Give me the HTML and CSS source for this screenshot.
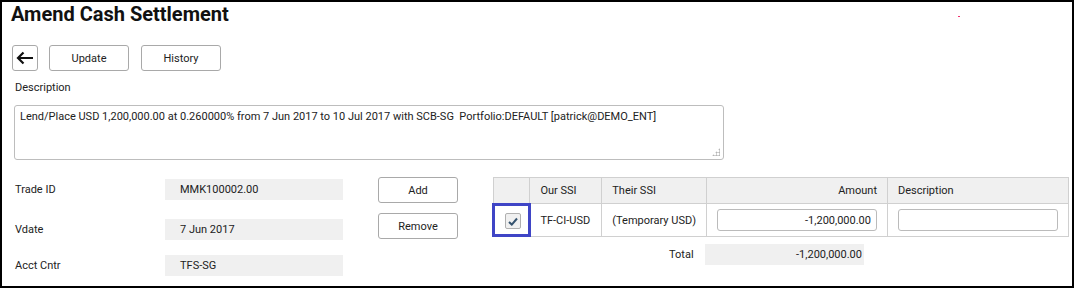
FILE: index.html
```html
<!DOCTYPE html>
<html lang="en">
<head>
    <meta charset="UTF-8">
    <title>Amend Cash Settlement</title>
    <link rel="stylesheet" href="styles.css">
</head>
<body>
    <div class="frame">
        <h1 class="page-title">Amend Cash Settlement</h1>
        <span class="marker"></span>

        <div class="toolbar">
            <button class="btn btn-back" title="Back">
                <svg width="18" height="14" viewBox="0 0 18 14">
                    <path d="M17 7H2M7.5 1.5L2 7l5.5 5.5" fill="none" stroke="#111" stroke-width="2.2"/>
                </svg>
            </button>
            <button class="btn">Update</button>
            <button class="btn">History</button>
        </div>

        <div class="desc-label">Description</div>
        <div class="desc-wrap">
            <textarea class="desc-box">Lend/Place USD 1,200,000.00 at 0.260000% from 7 Jun 2017 to 10 Jul 2017 with SCB-SG  Portfolio:DEFAULT [patrick@DEMO_ENT]</textarea>
        </div>

        <div class="lower">
            <div class="fields">
                <div class="field">
                    <span class="field-label">Trade ID</span>
                    <span class="field-value">MMK100002.00</span>
                </div>
                <div class="field">
                    <span class="field-label">Vdate</span>
                    <span class="field-value">7 Jun 2017</span>
                </div>
                <div class="field">
                    <span class="field-label">Acct Cntr</span>
                    <span class="field-value">TFS-SG</span>
                </div>
            </div>

            <div class="side-buttons">
                <button class="btn">Add</button>
                <button class="btn">Remove</button>
            </div>

            <div class="ssi">
                <table class="ssi-table">
                    <thead>
                        <tr>
                            <th class="col-check"></th>
                            <th class="col-our">Our SSI</th>
                            <th class="col-their">Their SSI</th>
                            <th class="col-amount num">Amount</th>
                            <th class="col-desc">Description</th>
                        </tr>
                    </thead>
                    <tbody>
                        <tr>
                            <td class="col-check focused">
                                <span class="check-box">
                                    <svg width="10" height="9" viewBox="0 0 10 9">
                                        <path d="M1 5l2.8 2.6L9 1.5" fill="none" stroke="#35536f" stroke-width="2"/>
                                    </svg>
                                </span>
                            </td>
                            <td>TF-CI-USD</td>
                            <td>(Temporary USD)</td>
                            <td><input class="cell-input num" value="-1,200,000.00"></td>
                            <td><input class="cell-input" value=""></td>
                        </tr>
                    </tbody>
                </table>
                <div class="total-row">
                    <span class="total-label">Total</span>
                    <span class="total-value">-1,200,000.00</span>
                </div>
            </div>
        </div>
    </div>
</body>
</html>
```

FILE: styles.css
```css
* {
    margin: 0;
    padding: 0;
    box-sizing: border-box;
}

body {
    font-family: Roboto, "Liberation Sans", sans-serif;
    font-size: 11px;
    color: #222;
    background: #fff;
}

.frame {
    position: relative;
    width: 1074px;
    height: 288px;
    border: 2px solid #000;
}

.page-title {
    font-size: 20px;
    font-weight: 700;
    line-height: 24px;
    color: #111;
    padding-left: 9px;
}

.marker {
    position: absolute;
    left: 956px;
    top: 14px;
    width: 2px;
    height: 1px;
    background: #f0326e;
}

.toolbar {
    display: flex;
    gap: 12px;
    margin-top: 19px;
    padding-left: 10px;
}

.btn {
    font-family: inherit;
    font-size: 11px;
    color: #222;
    background: #fff;
    border: 1px solid #a9a9a9;
    border-radius: 3px;
    width: 80px;
    height: 26px;
    cursor: pointer;
}

.btn-back {
    width: 26px;
    margin-right: -1px;
    display: flex;
    align-items: center;
    justify-content: center;
}

.desc-label {
    margin-top: 10px;
    padding-left: 13px;
    line-height: 14px;
}

.desc-wrap {
    position: relative;
    width: 710px;
    margin: 10px 0 0 12px;
}

/* dotted grip in the corner */
.desc-wrap::after {
    content: "";
    position: absolute;
    right: 4px;
    bottom: 4px;
    width: 8px;
    height: 8px;
    background:
        radial-gradient(circle, #b5b5b5 0.9px, transparent 1.2px) 0 0 / 3px 3px;
    clip-path: polygon(100% 0, 100% 100%, 0 100%);
}

.desc-box {
    display: block;
    width: 710px;
    height: 55px;
    padding: 4px 5px;
    font-family: inherit;
    font-size: 11px;
    line-height: 14px;
    color: #222;
    border: 1px solid #bdbdbd;
    border-radius: 3px;
    resize: none;
}

.lower {
    display: flex;
    align-items: flex-start;
    margin-top: 17px;
    padding-left: 13px;
}

.fields {
    padding-top: 2px;
    width: 328px;
}

.field {
    display: flex;
    align-items: center;
    height: 21px;
}

.field + .field {
    margin-top: 19px;
}

.field:last-child {
    margin-top: 15px;
}

.field-label {
    width: 150px;
}

.field-value {
    width: 178px;
    height: 21px;
    line-height: 21px;
    padding-left: 15px;
    background: #f0f0f0;
}

.side-buttons {
    display: flex;
    flex-direction: column;
    gap: 10px;
    margin-left: 35px;
}

.ssi {
    margin-left: 35px;
}

.ssi-table {
    border-collapse: collapse;
    width: 576px;
}

.ssi-table th,
.ssi-table td {
    border: 1px solid #d0d0d0;
    padding: 0 10px;
    text-align: left;
    font-weight: 400;
    white-space: nowrap;
}

.ssi-table th {
    height: 26px;
    background: #f0f0f0;
}

.ssi-table td {
    height: 33px;
}

.ssi-table .num {
    text-align: right;
}

.col-check {
    width: 38px;
}

.col-our {
    width: 72px;
}

.col-their {
    width: 104px;
}

.col-amount,
.col-desc {
    width: 181px;
}

.ssi-table td.col-check {
    position: relative;
    padding: 0;
    text-align: center;
}

.focused::after {
    content: "";
    position: absolute;
    left: -2px;
    right: -2px;
    top: -1px;
    bottom: -1px;
    border: 3px solid #3f45c6;
}

.check-box {
    display: inline-flex;
    align-items: center;
    justify-content: center;
    width: 16px;
    height: 16px;
    margin-top: 2px;
    margin-left: 2px;
    border: 1px solid #b0b0b0;
    border-radius: 2px;
    background: #f0f0f0;
}

.cell-input {
    width: 160px;
    height: 22px;
    padding: 0 5px;
    font-family: inherit;
    font-size: 11px;
    color: #222;
    border: 1px solid #bbb;
    border-radius: 3px;
}

.total-row {
    display: flex;
    align-items: center;
    margin-top: 7px;
    padding-left: 176px;
}

.total-label {
    width: 36px;
}

.total-value {
    width: 159px;
    height: 21px;
    line-height: 21px;
    padding-right: 2px;
    text-align: right;
    background: #f0f0f0;
}
```
